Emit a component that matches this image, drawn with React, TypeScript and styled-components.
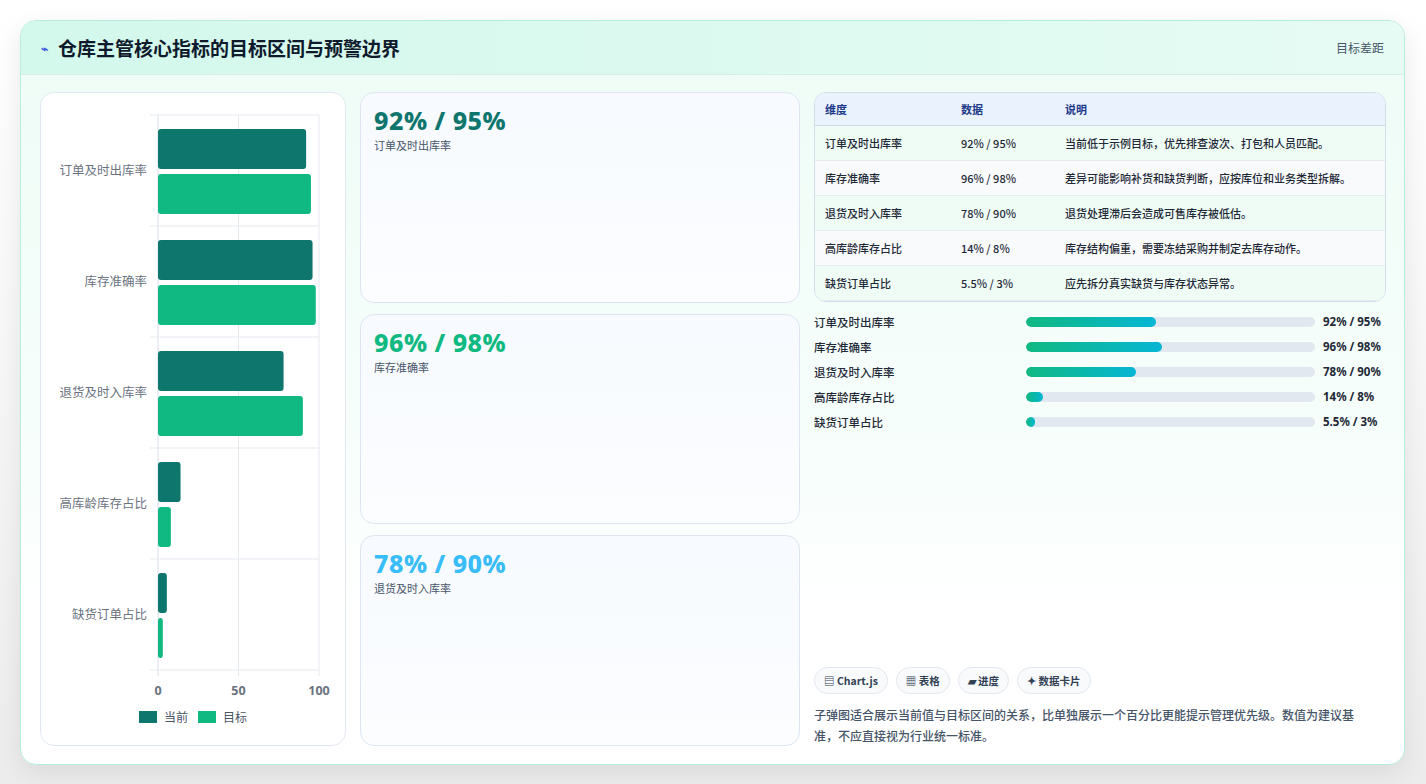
import React from "react";
import styled, { createGlobalStyle } from "styled-components";

const G = createGlobalStyle`
  html,body{margin:0;padding:0;background:linear-gradient(#ffffff,#ececec);font-family:"Noto Sans CJK SC","Noto Sans",sans-serif;}
  *{box-sizing:border-box;}
`;
const Page = styled.div`padding:20px 21px 19px 20px;height:784px;`;
const Card = styled.div`
  height:745px;border:1px solid #b9ece0;border-radius:16px;overflow:hidden;
  background:linear-gradient(180deg,#eefcf6 0%,#f7fefb 60%,#ffffff 80%);
  box-shadow:0 8px 24px rgba(0,0,0,0.08);display:flex;flex-direction:column;
`;
const Header = styled.div`
  height:55px;display:flex;align-items:center;justify-content:space-between;padding:0 20px;
  background:linear-gradient(90deg,#d3f8ec,#e6fbf4);border-bottom:1px solid #d5efe8;
`;
const Title = styled.h1`margin:0;font-size:19px;font-weight:700;color:#0f1b2d;display:flex;align-items:center;gap:10px;`;
const Icon = styled.span`color:#3b5bdb;font-size:12px;`;
const HeadRight = styled.span`font-size:12px;color:#475569;`;
const Body = styled.div`flex:1;display:grid;grid-template-columns:306px 440px 1fr;gap:14px;padding:17px 18px 18px 19px;`;
const Panel = styled.div`background:#fff;border:1px solid #e2e8f0;border-radius:14px;display:flex;flex-direction:column;align-items:center;`;
const Mid = styled.div`display:grid;grid-template-rows:1fr 1fr 1fr;gap:11px;`;
const Stat = styled.div`border:1px solid #dde6f0;border-radius:14px;background:linear-gradient(#f7fafe,#fbfdff);padding:12px 13px;`;
const Big = styled.div<{c:string}>`font-family:"Noto Sans",sans-serif;font-size:25px;font-weight:800;color:${p=>p.c};letter-spacing:0.5px;line-height:1.2;`;
const Sub = styled.div`font-size:11px;color:#475569;margin-top:2px;`;
const Right = styled.div`display:flex;flex-direction:column;`;
const Table = styled.table`width:100%;border-collapse:separate;border-spacing:0;border:1px solid #d3dde9;border-radius:12px;overflow:hidden;font-size:11px;`;
const Th = styled.th`text-align:left;font-weight:700;color:#1e3a8a;background:#eaf3fd;height:33px;padding:0 10px;border-bottom:1px solid #cfdbe8;`;
const Td = styled.td<{alt?:boolean}>`height:35px;padding:0 10px;color:#1f2937;font-weight:500;background:${p=>p.alt?"#f8fafc":"#effcf6"};border-bottom:1px solid #e5edf3;`;
const Bars = styled.div`display:flex;flex-direction:column;gap:8px;margin-top:11px;`;
const BarRow = styled.div`display:grid;grid-template-columns:204px 289px auto;align-items:center;column-gap:8px;font-size:11.5px;color:#1f2937;font-weight:500;height:17px;white-space:nowrap;`;
const Track = styled.div`height:10px;border-radius:5px;background:#e2e8f0;overflow:hidden;`;
const Fill = styled.div`height:100%;border-radius:5px;background:linear-gradient(90deg,#10b981,#06b6d4);`;
const Val = styled.span`font-weight:700;font-family:"Noto Sans","Noto Sans CJK SC",sans-serif;font-size:11.5px;`;
const Spacer = styled.div`flex:1;`;
const Chips = styled.div`display:flex;gap:8px;`;
const Chip = styled.span`font-size:10.5px;font-weight:700;color:#334155;border:1px solid #e2e8f0;background:#f8fafc;border-radius:14px;padding:5px 9px;`;
const Note = styled.p`margin:10px 14px 0 0;font-size:12px;line-height:21px;color:#475569;font-weight:500;`;

const cats=["订单及时出库率","库存准确率","退货及时入库率","高库龄库存占比","缺货订单占比"];
const cur=[92,96,78,14,5.5], tgt=[95,98,90,8,3];
const Chart=()=>{
  const x0=117,w=161,y0=22,h=111;
  return <svg width="304" height="652" viewBox="0 0 304 652">
    {[0,50,100].map(v=><line key={v} x1={x0+v*w/100} x2={x0+v*w/100} y1={y0} y2={y0+5*h+6} stroke={v===0?"#d7dde5":"#e5e9f0"}/>)}
    {[0,1,2,3,4,5].map(i=><line key={i} x1={x0-8} x2={x0+w} y1={y0+i*h} y2={y0+i*h} stroke="#e5e9f0"/>)}
    {cats.map((c,i)=><g key={c}>
      <text x={x0-11} y={y0+i*h+h/2+4} textAnchor="end" fontSize="12.5" fill="#6b7280">{c}</text>
      <rect x={x0} y={y0+i*h+14} width={cur[i]*w/100} height={40} rx="3" fill="#0f766e"/>
      <rect x={x0} y={y0+i*h+59} width={tgt[i]*w/100} height={40} rx="3" fill="#10b981"/>
    </g>)}
    {[0,50,100].map(v=><text key={v} x={x0+v*w/100} y={y0+5*h+25} textAnchor="middle" fontSize="12.5" fontWeight="700" fill="#6b7280" fontFamily="Noto Sans">{v}</text>)}
    <rect x="98" y="618" width="18" height="12" fill="#0f766e"/>
    <text x="123" y="629" fontSize="12" fill="#4b5563">当前</text>
    <rect x="157" y="618" width="18" height="12" fill="#10b981"/>
    <text x="182" y="629" fontSize="12" fill="#4b5563">目标</text>
  </svg>;
};

const rows=[["订单及时出库率","92% / 95%","当前低于示例目标，优先排查波次、打包和人员匹配。"],["库存准确率","96% / 98%","差异可能影响补货和缺货判断，应按库位和业务类型拆解。"],["退货及时入库率","78% / 90%","退货处理滞后会造成可售库存被低估。"],["高库龄库存占比","14% / 8%","库存结构偏重，需要冻结采购并制定去库存动作。"],["缺货订单占比","5.5% / 3%","应先拆分真实缺货与库存状态异常。"]];
const fills=[45,47,38,6,3];

export default function App(){
  return <><G/><Page><Card>
    <Header><Title><Icon>⌁</Icon>仓库主管核心指标的目标区间与预警边界</Title><HeadRight>目标差距</HeadRight></Header>
    <Body>
      <Panel><Chart/></Panel>
      <Mid>
        <Stat><Big c="#0f766e">92% / 95%</Big><Sub>订单及时出库率</Sub></Stat>
        <Stat><Big c="#10b981">96% / 98%</Big><Sub>库存准确率</Sub></Stat>
        <Stat><Big c="#38bdf8">78% / 90%</Big><Sub>退货及时入库率</Sub></Stat>
      </Mid>
      <Right>
        <Table><thead><tr><Th style={{width:136}}>维度</Th><Th style={{width:104}}>数据</Th><Th>说明</Th></tr></thead>
          <tbody>{rows.map((r,i)=><tr key={i}>{r.map((c,j)=><Td key={j} alt={i%2===1}>{c}</Td>)}</tr>)}</tbody></Table>
        <Bars>{rows.map((r,i)=><BarRow key={i}><span>{r[0]}</span><Track><Fill style={{width:fills[i]+"%"}}/></Track><Val>{r[1]}</Val></BarRow>)}</Bars>
        <Spacer/>
        <Chips><Chip>▤ Chart.js</Chip><Chip>▦ 表格</Chip><Chip>▰ 进度</Chip><Chip>✦ 数据卡片</Chip></Chips>
        <Note>子弹图适合展示当前值与目标区间的关系，比单独展示一个百分比更能提示管理优先级。数值为建议基准，不应直接视为行业统一标准。</Note>
      </Right>
    </Body>
  </Card></Page></>;
}
